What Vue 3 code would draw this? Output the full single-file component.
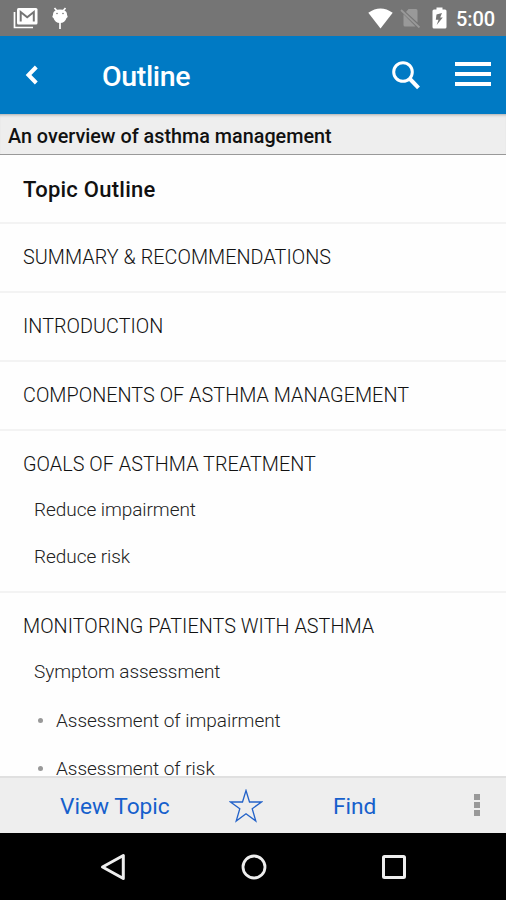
<template>
  <div class="screen">
    <div class="status-bar">
      <svg class="gmail" width="25" height="22" viewBox="0 0 25 22">
        <path d="M1.5 5V20.5H20" fill="none" stroke="#fff" stroke-width="1.7" />
        <rect x="4" y="1" width="20.5" height="16.5" rx="1.5" fill="#fff" />
        <path d="M7.7 14.5V5L14.2 10.2L20.8 5V14.5" fill="none" stroke="#757575" stroke-width="2" />
      </svg>
      <svg class="bug" width="18" height="23" viewBox="0 0 18 23">
        <path d="M3.5 1L6 4M14.5 1L12 4M9 15V22" stroke="#fff" stroke-width="1.7" />
        <path d="M2 7Q2.5 2.5 9 2.5Q15.5 2.5 16 7V8Q17.5 10 15.5 11Q14 16 9 16Q4 16 2.5 11Q.5 10 2 8Z" fill="#fff" />
        <circle cx="6" cy="6.5" r=".8" fill="#757575" />
        <circle cx="12" cy="6.5" r=".8" fill="#757575" />
      </svg>
      <span class="spacer"></span>
      <svg class="wifi" width="25" height="21" viewBox="0 0 25 21">
        <path d="M.3 4.8Q12.5 -4 24.7 4.8L12.5 20.5Z" fill="#fff" />
      </svg>
      <svg class="sim" width="21" height="20" viewBox="0 0 21 20">
        <path d="M8.5 1H16Q17.5 1 17.5 2.5V14.5L6 4ZM3.5 6.2L15.5 18.5H5Q3.5 18.5 3.5 17Z" fill="#999" />
        <path d="M1 2L19.5 19.5" stroke="#999" stroke-width="1.8" />
      </svg>
      <svg class="battery" width="15" height="22" viewBox="0 0 15 22">
        <path d="M4.5 .5H10.5V2.5H13Q14.500 2.500 14.500 4V20Q14.500 21.500 13 21.500H2Q.5 21.500 .5 20V4Q.5 2.500 2 2.500H4.500Z" fill="#fff" />
        <path d="M10 6L4.500 7.500L3.800 12.800H6.500L4.700 18L10.800 10.500H8.200Z" fill="#757575" />
      </svg>
      <span class="time">5:00</span>
    </div>

    <header class="header">
      <svg class="back" width="14" height="20" viewBox="0 0 14 20">
        <path d="M11.3 2L3.5 10L11.3 18" fill="none" stroke="#fff" stroke-width="4" />
      </svg>
      <h1>Outline</h1>
      <svg class="search" width="28" height="29" viewBox="0 0 28 29">
        <circle cx="11" cy="11" r="9.3" fill="none" stroke="#fff" stroke-width="3" />
        <path d="M17.5 17.5L26.5 26.8" stroke="#fff" stroke-width="4" />
      </svg>
      <div class="menu"><i></i><i></i><i></i></div>
    </header>

    <div class="topic-title"><span>An overview of asthma management</span></div>

    <main class="outline">
      <h2><span>Topic Outline</span></h2>
      <section v-for="section in sections" :key="section.title">
        <p class="section-title"><span>{{ section.title }}</span></p>
        <template v-for="item in section.items" :key="item.title">
          <p class="item"><span>{{ item.title }}</span></p>
          <p v-for="child in item.children" :key="child" class="child"><i></i><span>{{ child }}</span></p>
        </template>
      </section>
    </main>

    <footer class="toolbar">
      <a class="view">View Topic</a>
      <svg class="star" width="34" height="34" viewBox="0 0 34 34">
        <path d="M17 1.5L20.5 13H32.5L23.2 19.7L26.8 32L17 24.7L7.2 32L10.8 19.7L1.5 13H13.5Z" fill="none" stroke="#2463c9" stroke-width="1.3" />
      </svg>
      <a class="find">Find</a>
      <div class="more"><i></i><i></i><i></i></div>
    </footer>

    <nav class="nav-bar">
      <svg width="26" height="28" viewBox="0 0 26 28">
        <path d="M23.3 2.5V25.5L2.5 14Z" fill="none" stroke="#eee" stroke-width="3" stroke-linejoin="round" />
      </svg>
      <svg width="26" height="26" viewBox="0 0 26 26">
        <circle cx="13" cy="13" r="11" fill="none" stroke="#eee" stroke-width="2.8" />
      </svg>
      <svg width="26" height="26" viewBox="0 0 26 26">
        <rect x="2.5" y="2.5" width="21" height="21" rx="1" fill="none" stroke="#eee" stroke-width="3" />
      </svg>
    </nav>
  </div>
</template>

<script setup>
const sections = [
  { title: 'SUMMARY & RECOMMENDATIONS' },
  { title: 'INTRODUCTION' },
  { title: 'COMPONENTS OF ASTHMA MANAGEMENT' },
  {
    title: 'GOALS OF ASTHMA TREATMENT',
    items: [{ title: 'Reduce impairment' }, { title: 'Reduce risk' }]
  },
  {
    title: 'MONITORING PATIENTS WITH ASTHMA',
    items: [
      {
        title: 'Symptom assessment',
        children: ['Assessment of impairment', 'Assessment of risk']
      }
    ]
  }
]
</script>

<style>
body {
  margin: 0;
}
</style>

<style scoped>
.screen {
  width: 506px;
  height: 900px;
  display: flex;
  flex-direction: column;
  overflow: hidden;
  background: #fefefe;
  font-family: Roboto, "Liberation Sans", sans-serif;
  color: #111;
}
h1, h2, p {
  margin: 0;
}
svg {
  display: block;
  flex: none;
}
.status-bar {
  flex: none;
  height: 36px;
  box-sizing: border-box;
  padding: 0 11px 0 13px;
  display: flex;
  align-items: center;
  background: #757575;
}
.bug {
  margin-left: 13px;
}
.spacer {
  flex: 1;
}
.sim {
  margin-left: 7px;
}
.battery {
  margin-left: 11px;
}
.time {
  width: 39px;
  margin-left: 9px;
  padding-top: 2px;
  color: #fff;
  font-size: 20px;
  font-weight: 500;
  letter-spacing: -0.1px;
  white-space: nowrap;
}
.header {
  flex: none;
  height: 78px;
  box-sizing: border-box;
  padding: 0 15px 0 25px;
  display: flex;
  align-items: center;
  background: #007ac4;
}
.header h1 {
  flex: 1;
  margin-left: 63px;
  padding-top: 4px;
  color: #fff;
  font-size: 28.5px;
  line-height: 34px;
  font-weight: 500;
  letter-spacing: -0.35px;
}
.search {
  margin-top: 1px;
}
.menu {
  width: 36px;
  margin-left: 35px;
  padding-bottom: 2px;
  display: flex;
  flex-direction: column;
  gap: 6px;
}
.menu i {
  height: 4px;
  background: #fff;
}
.topic-title {
  flex: none;
  height: 41px;
  box-sizing: border-box;
  padding: 4px 8px 0;
  border-bottom: 1px solid #999;
  background: #eee;
  box-shadow: inset 0 3px 3px -2px #aaa;
  font-size: 19.8px;
  line-height: 38px;
  font-weight: 500;
}
.outline {
  flex: 1;
  min-height: 0;
  overflow: hidden;
}
.outline h2 {
  height: 69px;
  box-sizing: border-box;
  padding-left: 23px;
  border-bottom: 2px solid #f3f3f3;
  font-size: 22px;
  line-height: 70px;
  font-weight: 500;
  letter-spacing: 0.25px;
}
section {
  border-bottom: 2px solid #f3f3f3;
}
.section-title {
  height: 67px;
  padding-left: 23px;
  font-size: 19.8px;
  line-height: 67px;
  font-weight: 300;
  letter-spacing: 0.04px;
}
.item {
  height: 46.5px;
  padding-left: 34px;
  color: #222;
  font-size: 19px;
  line-height: 24px;
  font-weight: 300;
  letter-spacing: -0.06px;
}
.child {
  height: 48px;
  padding-left: 38px;
  display: flex;
  color: #222;
  font-size: 19px;
  line-height: 27px;
  font-weight: 300;
  letter-spacing: -0.03px;
}
.child i {
  width: 5px;
  height: 5px;
  margin: 11px 13px 0 0;
  border-radius: 50%;
  background: #999;
}
.toolbar {
  flex: none;
  height: 57px;
  box-sizing: border-box;
  padding: 0 26px 0 60px;
  display: flex;
  align-items: center;
  border-top: 2px solid #e0e0e0;
  background: #eee;
  color: #1660cc;
  font-size: 22.7px;
  line-height: 28px;
}
.view {
  width: 110px;
  padding-top: 3px;
  white-space: nowrap;
}
.star {
  margin-left: 59px;
}
.find {
  margin-left: 70px;
  flex: 1;
  padding-top: 3px;
}
.more {
  width: 6px;
  padding-bottom: 2px;
  display: flex;
  flex-direction: column;
  gap: 2px;
}
.more i {
  height: 6px;
  background: #999;
}
.nav-bar {
  flex: none;
  height: 67px;
  padding: 0 99px 0 100px;
  box-sizing: border-box;
  display: flex;
  justify-content: space-between;
  align-items: center;
  background: #000;
}
</style>
